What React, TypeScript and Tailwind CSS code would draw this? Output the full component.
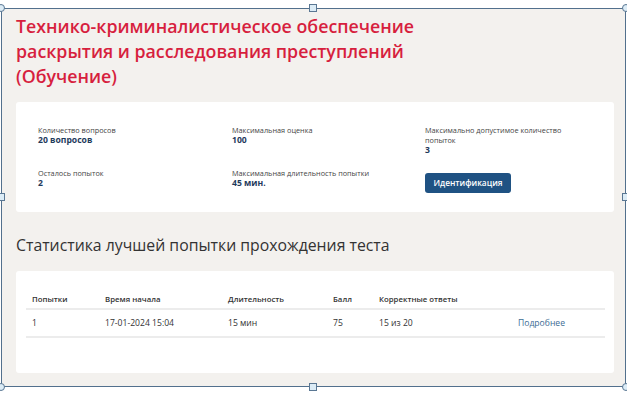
import React from 'react';

const Handle = ({ className, round }: { className: string; round?: boolean }) => (
  <div
    className={`absolute w-[8px] h-[8px] border border-[#5a7793] bg-[#dcecf6] ${round ? 'rounded-full' : ''} ${className}`}
  />
);

const Info = ({ label, value }: { label: string; value: string }) => (
  <div className="flex flex-col">
    <span className="text-[7.3px] leading-[10px] text-[#444]">{label}</span>
    <span className="text-[8.6px] leading-[11px] font-bold text-[#1f3a5c]">{value}</span>
  </div>
);

const App = () => {
  const rows = [
    { n: '1', start: '17-01-2024 15:04', dur: '15 мин', score: '75', correct: '15 из 20' },
  ];

  return (
    <div className="w-[627px] h-[393px] bg-white pt-[8px] pl-[1px]" style={{ fontFamily: '"Open Sans", "Noto Sans", sans-serif' }}>
      <div className="relative w-[625px] h-[379px] border border-[#52708d] bg-[#f3f1ee]">
        <div className="h-full overflow-hidden pl-[14px] pr-[11px] pt-[5px]">
          <h1 className="text-[17.8px] leading-[25px] font-semibold text-[#d71f3e]">
            Технико-криминалистическое обеспечение
            <br />
            раскрытия и расследования преступлений
            <br />
            (Обучение)
          </h1>

          <div className="mt-[13px] h-[110px] bg-white rounded-[3px] pt-[23px] pl-[22px]">
            <div className="grid grid-cols-[194px_193px_170px] gap-y-[12px]">
              <Info label="Количество вопросов" value="20 вопросов" />
              <Info label="Максимальная оценка" value="100" />
              <div className="flex flex-col">
                <span className="text-[7.3px] leading-[10px] text-[#444]">
                  Максимально допустимое количество
                  <br />
                  попыток
                </span>
                <span className="text-[8.6px] leading-[11px] font-bold text-[#1f3a5c]">3</span>
              </div>
              <Info label="Осталось попыток" value="2" />
              <Info label="Максимальная длительность попытки" value="45 мин." />
              <div>
                <button className="h-[20px] w-[86px] rounded-[3px] bg-[#1f5283] text-white text-[8.3px] font-semibold">
                  Идентификация
                </button>
              </div>
            </div>
          </div>

          <h2 className="mt-[23px] text-[15.8px] leading-[20px] font-normal text-[#333]">
            Статистика лучшей попытки прохождения теста
          </h2>

          <div className="mt-[16px] h-[102px] bg-white rounded-[3px] pt-[20px] pl-[10px] pr-[9px]">
            <div className="grid grid-cols-[73px_123px_105px_46px_1fr_81px] h-[19px] items-center border-b-2 border-[#ececec] px-[6px] text-[7.8px] font-semibold text-[#333]">
              <span>Попытки</span>
              <span>Время начала</span>
              <span>Длительность</span>
              <span>Балл</span>
              <span>Корректные ответы</span>
              <span />
            </div>
            {rows.map((r) => (
              <div
                key={r.n}
                className="grid grid-cols-[73px_123px_105px_46px_1fr_81px] h-[28px] items-center border-b-2 border-[#ececec] px-[6px] text-[8.6px] text-[#333]"
              >
                <span>{r.n}</span>
                <span>{r.start}</span>
                <span>{r.dur}</span>
                <span>{r.score}</span>
                <span>{r.correct}</span>
                <span className="text-[#3d6c94]">Подробнее</span>
              </div>
            ))}
          </div>
        </div>

        <Handle round className="-left-[5px] -top-[5px]" />
        <Handle className="left-[307px] -top-[5px]" />
        <Handle round className="-right-[5px] -top-[5px]" />
        <Handle className="-left-[5px] top-[184px]" />
        <Handle className="-right-[5px] top-[184px]" />
        <Handle round className="-left-[5px] -bottom-[5px]" />
        <Handle className="left-[307px] -bottom-[5px]" />
        <Handle round className="-right-[5px] -bottom-[5px]" />
      </div>
    </div>
  );
};

export default App;
